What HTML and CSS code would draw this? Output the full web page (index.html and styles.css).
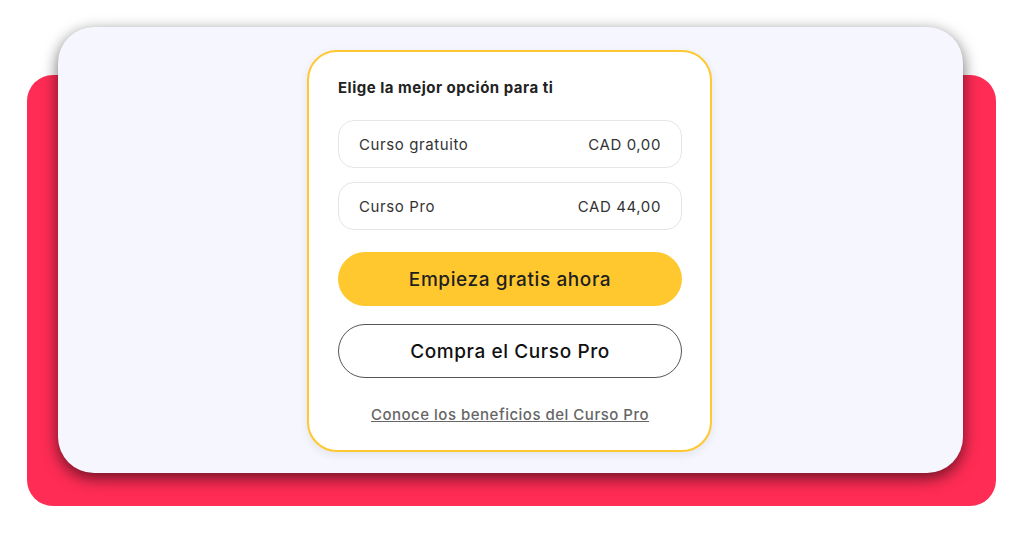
FILE: index.html
```html
<!DOCTYPE html>
<html lang="es">
<head>
<meta charset="UTF-8">
<meta name="viewport" content="width=device-width, initial-scale=1.0">
<title>Elige tu curso</title>
<link rel="stylesheet" href="styles.css">
</head>
<body>
<div class="backdrop">
  <div class="panel">
    <div class="plan-card">
      <h2 class="plan-title">Elige la mejor opción para ti</h2>
      <div class="option">
        <span>Curso gratuito</span>
        <span>CAD 0,00</span>
      </div>
      <div class="option">
        <span>Curso Pro</span>
        <span>CAD 44,00</span>
      </div>
      <button class="btn btn-primary">Empieza gratis ahora</button>
      <button class="btn btn-outline">Compra el Curso Pro</button>
      <a class="benefits-link" href="#">Conoce los beneficios del Curso Pro</a>
    </div>
  </div>
</div>
</body>
</html>
```
FILE: styles.css
```css
html, body {
  margin: 0;
  padding: 0;
  background-color: #fff;
  font-family: Inter, 'Open Sans', sans-serif;
}
body {
  padding: 75px 28px 30px 27px;
}
.backdrop {
  background-color: #ff2c55;
  border-radius: 26px;
  padding: 0 33px 33px 31px;
}
.panel {
  position: relative;
  top: -48px;
  margin-bottom: -48px;
  height: 446px;
  background-color: #f6f6fe;
  border-radius: 36px;
  box-shadow: 0 5px 16px rgba(0, 0, 0, 0.6);
  display: flex;
  justify-content: center;
  align-items: flex-start;
  padding-top: 23px;
  box-sizing: border-box;
}
.plan-card {
  width: 344px;
  background-color: #fff;
  border: 2px solid #ffc830;
  border-radius: 30px;
  box-shadow: 0 3px 10px rgba(0, 0, 0, 0.08);
  padding: 26px 28px 25px 29px;
  display: flex;
  flex-direction: column;
  margin-right: 2px;
}
.plan-title {
  margin: 0 0 22px;
  font-size: 15px;
  line-height: 20px;
  font-weight: 700;
  letter-spacing: 0.5px;
  color: #222;
}
.option {
  height: 48px;
  box-sizing: border-box;
  border: 1px solid #e6e6e6;
  border-radius: 16px;
  display: flex;
  justify-content: space-between;
  align-items: center;
  padding: 0 20px;
  font-size: 15px;
  letter-spacing: 0.6px;
  color: #333;
  margin-bottom: 14px;
}
.option + .option {
  margin-bottom: 22px;
}
.btn {
  height: 54px;
  border-radius: 27px;
  font-family: inherit;
  font-size: 19px;
  font-weight: 500;
  letter-spacing: 0.6px;
  color: #1f1f1f;
  cursor: pointer;
}
.btn-primary {
  background-color: #ffc82e;
  border: none;
  margin-bottom: 18px;
}
.btn-outline {
  background-color: #fff;
  border: 1px solid #555;
  color: #111;
  margin-bottom: 27px;
}
.benefits-link {
  text-align: center;
  font-size: 15px;
  line-height: 20px;
  font-weight: 500;
  letter-spacing: 0.5px;
  color: #666;
}
```
